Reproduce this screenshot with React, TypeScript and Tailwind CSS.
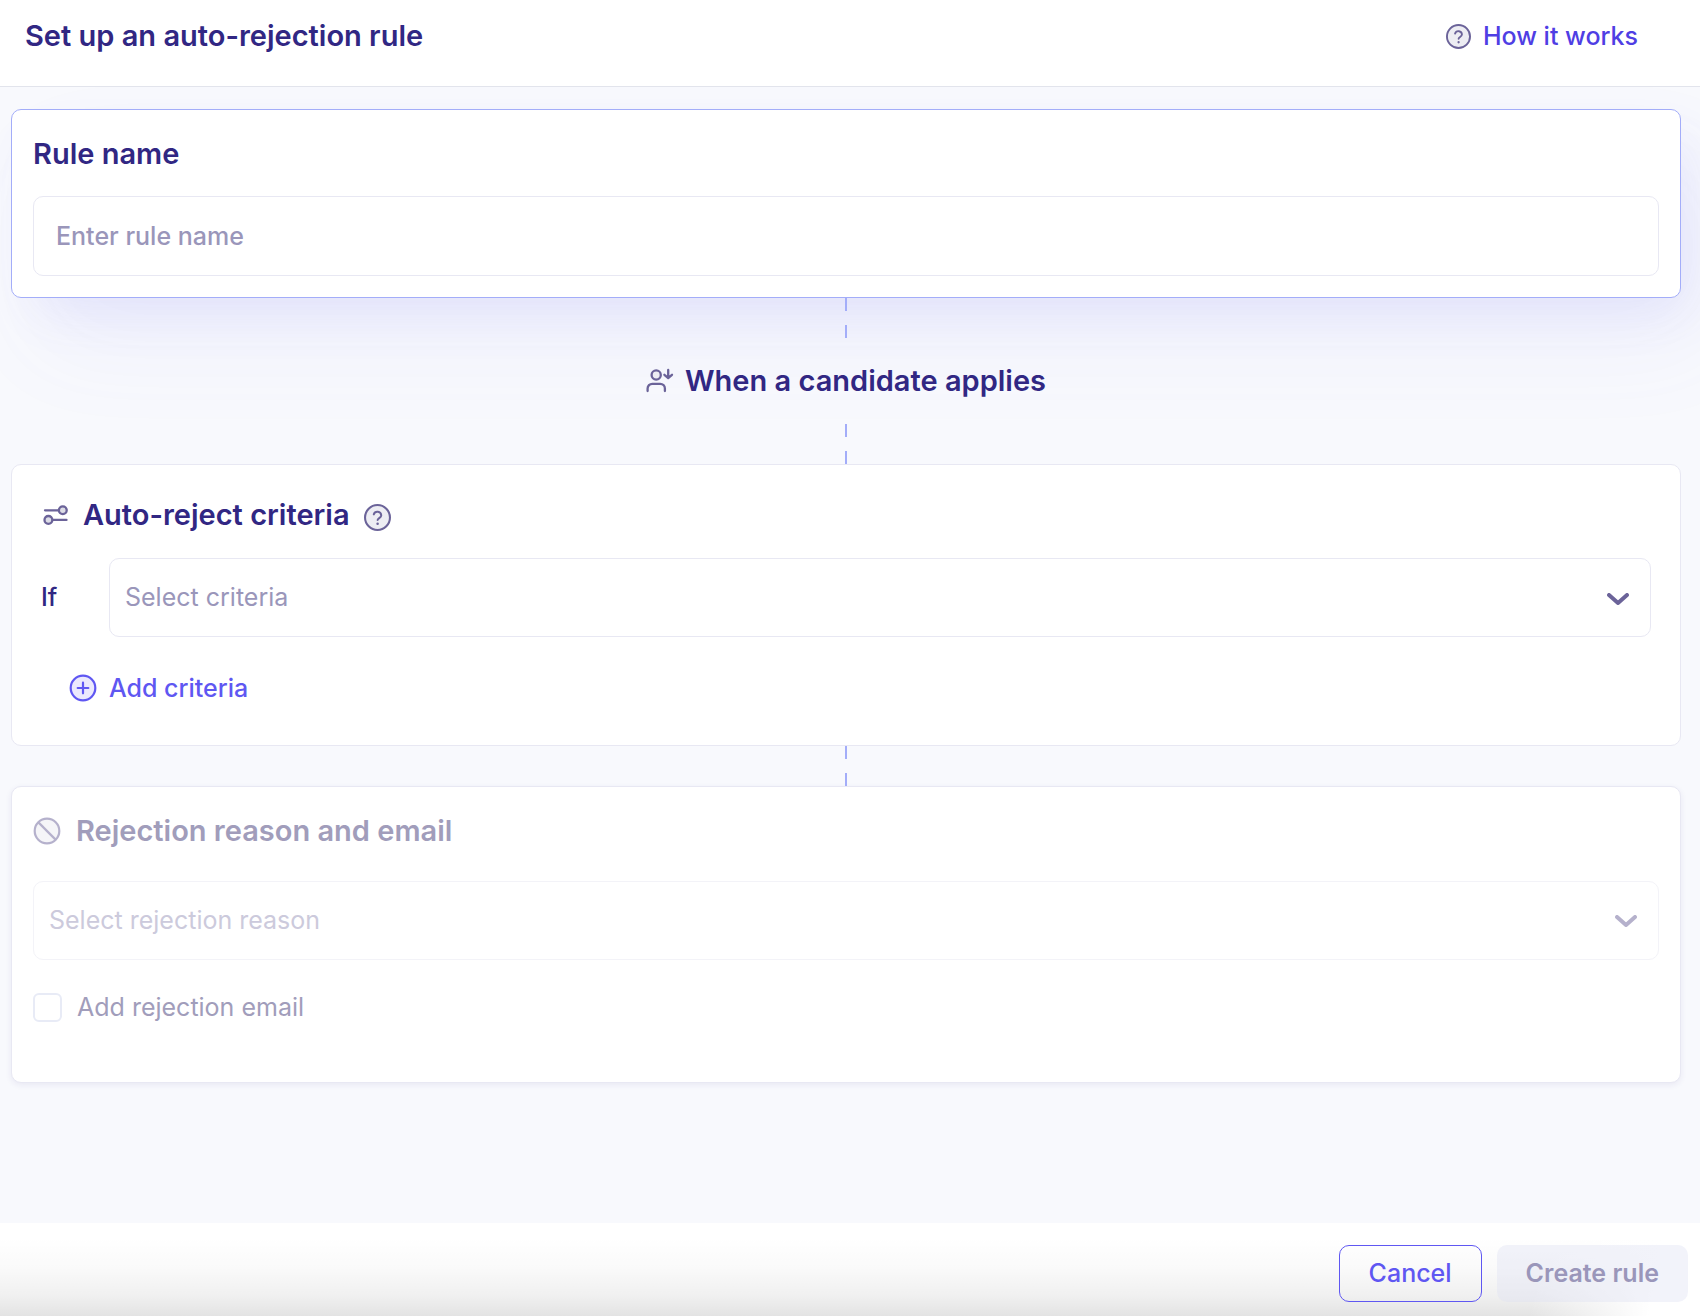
import type { ReactNode } from 'react';

const HelpIcon = ({ className }: { className?: string }) => (
  <svg viewBox="0 0 26 26" className={className} fill="none" aria-hidden="true">
    <circle cx="13" cy="13" r="12" fill="#ededf3" stroke="#6b6399" strokeWidth="2" />
    <path
      d="M9.4 10a3.7 3.7 0 0 1 7.2 1c0 2.2-3.5 2.8-3.5 4.4"
      stroke="#6b6399"
      strokeWidth="1.9"
      strokeLinecap="round"
      strokeLinejoin="round"
    />
    <circle cx="13.1" cy="19" r="1.2" fill="#6b6399" />
  </svg>
);

const CandidateIcon = () => (
  <svg viewBox="0 0 28 28" className="h-7 w-7" fill="none" stroke="#6b6399" strokeWidth="2.3" strokeLinecap="round" strokeLinejoin="round" aria-hidden="true">
    <circle cx="10.2" cy="8" r="4.6" fill="#ededf3" />
    <path d="M1.6 24v-2.5a4.7 4.7 0 0 1 4.7-4.7h7.9a4.7 4.7 0 0 1 4.7 4.7V24" />
    <path d="M22.2 3v7.5M18.4 7.8l3.8 3.2 3.8-3.2" />
  </svg>
);

const CriteriaIcon = () => (
  <svg viewBox="0 0 26 20" className="h-5 w-[26px]" fill="none" stroke="#6b6399" strokeWidth="2.3" strokeLinecap="round" aria-hidden="true">
    <path d="M2 5.3h13M10 14.9h13.5" />
    <circle cx="19.8" cy="5.3" r="3.9" fill="#dddde6" />
    <circle cx="5.4" cy="14.9" r="3.9" fill="#dddde6" />
  </svg>
);

const PlusIcon = () => (
  <svg viewBox="0 0 28 28" className="h-7 w-7" fill="none" stroke="#5f57f2" strokeWidth="2.2" strokeLinecap="round" aria-hidden="true">
    <circle cx="14" cy="14" r="12.3" fill="#ebe9fd" />
    <path d="M14 8.7v10.6M8.7 14h10.6" />
  </svg>
);

const BanIcon = () => (
  <svg viewBox="0 0 28 28" className="h-7 w-7" fill="none" stroke="#b5b1cc" strokeWidth="2.2" aria-hidden="true">
    <circle cx="14" cy="14" r="12.3" fill="#f5f5f8" />
    <path d="M5.4 5.4l17.2 17.2" />
  </svg>
);

const Chevron = ({ className }: { className: string }) => (
  <svg viewBox="0 0 22 12" className={className} fill="none" stroke="currentColor" strokeWidth="4" strokeLinecap="round" strokeLinejoin="round" aria-hidden="true">
    <path d="M2 2l9 8 9-8" />
  </svg>
);

// dashed line between two steps
const Connector = () => (
  <div className="flex h-10 flex-col items-center justify-between">
    <span className="h-[13px] w-0.5 bg-[#a3adf9]" />
    <span className="h-[13px] w-0.5 bg-[#a3adf9]" />
  </div>
);

const Card = ({ className, children }: { className: string; children: ReactNode }) => (
  <section className={`rounded-[10px] border bg-white ${className}`}>{children}</section>
);

const App = () => {
  return (
    <div className="flex min-h-screen flex-col bg-[#f8f9fd] font-['Inter',sans-serif] text-[25px] text-[#312783]">
      <header className="flex items-start justify-between border-b border-[#e2e4ec] bg-white pb-[30px] pl-[25px] pr-[62px] pt-4">
        <h1 className="text-[29px] font-semibold leading-10">Set up an auto-rejection rule</h1>
        <a href="#how-it-works" className="flex items-center gap-3 font-medium leading-10 text-[#4f3ee4]">
          <HelpIcon className="h-[25px] w-[25px]" />
          How it works
        </a>
      </header>

      <main className="flex-1 overflow-hidden pb-6 pl-[11px] pr-[19px] pt-[22px]">
        <Card className="border-[#a3adf9] p-[21px] shadow-[16px_24px_50px_-12px_rgba(99,102,241,0.11),28px_48px_100px_rgba(99,102,241,0.06)]">
          <label htmlFor="rule-name" className="block pt-[3px] text-[29px] font-semibold leading-10">
            Rule name
          </label>
          <input
            id="rule-name"
            type="text"
            placeholder="Enter rule name"
            className="mt-[22px] block h-20 w-full rounded-[10px] border border-[#e8e8f3] bg-white px-[22px] font-medium outline-none placeholder:text-[#9a96ba]"
          />
        </Card>

        <Connector />
        <div className="flex h-[86px] items-center justify-center gap-[11px]">
          <CandidateIcon />
          <h2 className="text-[29px] font-semibold leading-10">When a candidate applies</h2>
        </div>
        <Connector />

        <Card className="border-[#e8e8f3] px-[29px] pb-[37px] pt-[30px]">
          <div className="flex items-center gap-[14px] pl-0.5">
            <CriteriaIcon />
            <h2 className="text-[29px] font-semibold leading-10">Auto-reject criteria</h2>
            <button type="button" aria-label="About auto-reject criteria" className="pt-1">
              <HelpIcon className="h-[27px] w-[27px]" />
            </button>
          </div>
          <div className="mt-[23px] flex items-center">
            <label htmlFor="criteria" className="w-[68px] font-medium">
              If
            </label>
            <div className="relative flex-1">
              <select
                id="criteria"
                className="block h-[79px] w-full appearance-none rounded-[10px] border border-[#e8e8f3] bg-white px-[15px] text-[#9a96ba] outline-none"
              >
                <option>Select criteria</option>
              </select>
              <Chevron className="pointer-events-none absolute right-[22px] top-[35px] h-3 w-[22px] text-[#6b6399]" />
            </div>
          </div>
          <button type="button" className="ml-7 mt-[31px] flex items-center gap-3 font-medium leading-10 text-[#5f57f2]">
            <PlusIcon />
            Add criteria
          </button>
        </Card>

        <Connector />

        <Card className="border-[#e8e8f3] px-[21px] pb-[55px] pt-6 shadow-[0_2px_6px_rgba(49,39,131,0.08)]">
          <div className="flex items-center gap-[15px] text-[#a19dbb]">
            <BanIcon />
            <h2 className="text-[29px] font-semibold leading-10">Rejection reason and email</h2>
          </div>
          <div className="relative mt-[30px]">
            <select
              disabled
              aria-label="Rejection reason"
              className="block h-[79px] w-full appearance-none rounded-[10px] border border-[#f3f3f8] bg-white px-[15px] text-[#cccadc] opacity-100"
            >
              <option>Select rejection reason</option>
            </select>
            <Chevron className="pointer-events-none absolute right-[22px] top-[34px] h-3 w-[22px] text-[#b5b1cc]" />
          </div>
          <div className="mt-[27px] flex items-center gap-[15px] text-[#a19dbb]">
            <input
              id="rejection-email"
              type="checkbox"
              disabled
              className="h-[29px] w-[29px] appearance-none rounded-md border-2 border-[#e8ebf6] bg-white"
            />
            <label htmlFor="rejection-email" className="leading-10">
              Add rejection email
            </label>
          </div>
        </Card>
      </main>

      <footer className="flex justify-end gap-[15px] bg-white bg-[linear-gradient(100deg,transparent_90%,white_97%),linear-gradient(to_top,rgba(0,0,0,0.11),rgba(0,0,0,0.06)_22%,rgba(0,0,0,0.02)_52%,transparent_85%)] pb-3.5 pl-3 pr-3 pt-[22px]">
        <button type="button" className="h-[57px] rounded-[10px] border border-[#5f57f2] px-[29px] font-medium text-[#5f57f2]">
          Cancel
        </button>
        <button type="button" disabled className="h-[57px] rounded-[10px] bg-[#dfe2f2]/40 px-[29px] font-semibold text-[#9a96ba]">
          Create rule
        </button>
      </footer>
    </div>
  );
};

export default App;
